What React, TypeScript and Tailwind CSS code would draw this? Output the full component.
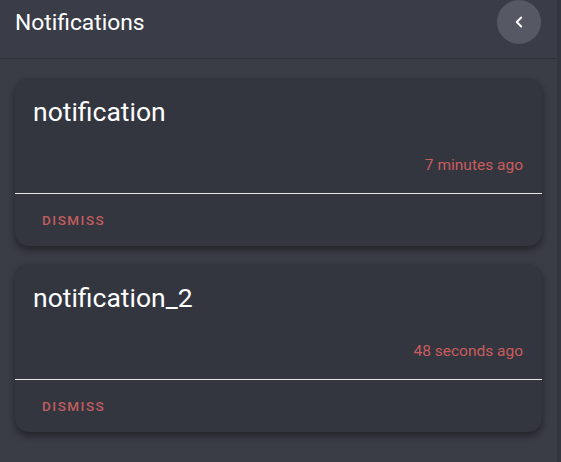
import { ChevronLeft } from "lucide-react"

const notifications = [
  { id: 1, title: "notification", time: "7 minutes ago" },
  { id: 2, title: "notification_2", time: "48 seconds ago" },
]

function NotificationCard({ title, time }: { title: string; time: string }) {
  return (
    <div className="rounded-[14px] bg-[#33353f] shadow-[0_4px_7px_rgba(0,0,0,0.4)]">
      <div className="h-[115px] px-[18px] pt-[17px] pr-[19px] flex flex-col">
        <div className="text-[26.5px] leading-[34px] text-white">{title}</div>
        <div className="mt-auto mb-[18px] text-right text-[15.5px] leading-5 text-[#c95d5d]">{time}</div>
      </div>
      <div className="h-px bg-[#e6e6e6]" />
      <div className="h-[52px] px-[18px] flex items-center">
        <button className="px-[9px] h-9 text-[13.5px] font-medium tracking-[1.5px] text-[#c25e5e] uppercase">
          Dismiss
        </button>
      </div>
    </div>
  )
}

export default function App() {
  return (
    <div className="w-[561px] h-[462px] overflow-hidden bg-[#3a3c46] flex font-['Roboto',sans-serif]">
      <div className="flex-1 flex flex-col">
        <header className="h-[59px] flex items-start justify-between border-b border-[#30323a] bg-[#3a3d47] pl-[15px] pr-4">
          <h1 className="mt-[9px] text-[22.8px] leading-7 text-white">Notifications</h1>
          <button className="w-11 h-11 rounded-full bg-[#565963] flex items-center justify-center text-white">
            <ChevronLeft size={18} strokeWidth={2.5} />
          </button>
        </header>
        <main className="flex flex-col gap-[18px] pt-[19px] pl-[15px] pr-[15px]">
          {notifications.map((n) => (
            <NotificationCard key={n.id} title={n.title} time={n.time} />
          ))}
        </main>
      </div>
      <div className="w-[4px] bg-[#34363f]" />
    </div>
  )
}
